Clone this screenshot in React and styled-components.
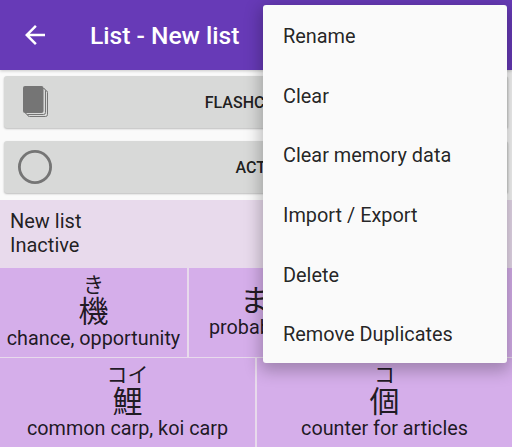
import React from "react"
import styled, { createGlobalStyle } from "styled-components"

const MENU_ITEMS = [
  "Rename",
  "Clear",
  "Clear memory data",
  "Import / Export",
  "Delete",
  "Remove Duplicates",
]

const App = () => (
  <Screen>
    <GlobalStyle />
    <Header>
      <BackIcon viewBox="0 0 24 24">
        <path d="M20 11H7.83l5.59-5.59L12 4l-8 8 8 8 1.41-1.41L7.83 13H20v-2z" />
      </BackIcon>
      <Title>List - New list</Title>
    </Header>

    <Buttons>
      <ActionButton>
        <DeckSlot>
          <svg width="28" height="34" viewBox="0 0 28 34">
            <rect x="5.5" y="5.5" width="20" height="26" rx="2" fill="#d8d9d8" stroke="#757575" />
            <rect x="3.5" y="3.5" width="20" height="26" rx="2" fill="#d8d9d8" stroke="#757575" />
            <rect x="1" y="1" width="20.5" height="27" rx="2" fill="#757575" />
          </svg>
        </DeckSlot>
        <ButtonLabel $shift="-2px">FLASHCARDS</ButtonLabel>
      </ActionButton>
      <ActionButton>
        <CircleSlot>
          <svg width="36" height="36" viewBox="0 0 36 36">
            <circle cx="18" cy="18" r="15.6" fill="none" stroke="#757575" strokeWidth="2.8" />
          </svg>
        </CircleSlot>
        <ButtonLabel $shift="32px">ACTIVATE</ButtonLabel>
      </ActionButton>
    </Buttons>

    <ListInfo>
      <div>New list</div>
      <div>Inactive</div>
    </ListInfo>

    <CardRow>
      <Card $basis="187px">
        <Reading>き</Reading>
        <Kanji>機</Kanji>
        <Meaning>chance, opportunity</Meaning>
      </Card>
      <Card $basis="132px">
        <Kanji>ま</Kanji>
        <Meaning>probability</Meaning>
      </Card>
      <Card />
    </CardRow>
    <CardRow>
      <Card>
        <Reading>コイ</Reading>
        <Kanji>鯉</Kanji>
        <Meaning>common carp, koi carp</Meaning>
      </Card>
      <Card>
        <Reading>コ</Reading>
        <Kanji>個</Kanji>
        <Meaning>counter for articles</Meaning>
      </Card>
    </CardRow>

    <Menu>
      {MENU_ITEMS.map(item => (
        <MenuItem key={item}>{item}</MenuItem>
      ))}
    </Menu>
  </Screen>
)

const GlobalStyle = createGlobalStyle`
  html, body {
    margin: 0;
    padding: 0;
    background: #fafafa;
  }
  body {
    font-family: Roboto, "Noto Sans CJK JP", sans-serif;
  }
`

const Screen = styled.div`
  position: relative;
  width: 512px;
  height: 447px;
  overflow: hidden;
  background: #fafafa;
`

const Header = styled.header`
  position: relative;
  display: flex;
  align-items: center;
  height: 70px;
  padding-left: 20px;
  background: #673ab7;
  box-shadow: 0 1px 3px rgba(0, 0, 0, 0.2);
`

const BackIcon = styled.svg`
  width: 30px;
  height: 30px;
  fill: #fff;
`

const Title = styled.h1`
  margin: 0 0 0 40px;
  color: #fff;
  font-size: 24.6px;
  font-weight: 500;
`

const Buttons = styled.div`
  display: flex;
  flex-direction: column;
  gap: 13px;
  padding: 6px 4px 7px;
`

const ActionButton = styled.div`
  position: relative;
  display: flex;
  align-items: center;
  justify-content: center;
  height: 52px;
  border-radius: 3px;
  background: #d8d9d8;
  box-shadow: 0 1px 2px rgba(0, 0, 0, 0.25);
`

const DeckSlot = styled.div`
  position: absolute;
  left: 18px;
  display: flex;
`

const CircleSlot = styled.div`
  position: absolute;
  left: 13px;
  display: flex;
`

const ButtonLabel = styled.span`
  margin-left: ${props => props.$shift || "0"};
  color: rgba(0, 0, 0, 0.87);
  font-size: 16px;
  font-weight: 500;
`

const ListInfo = styled.div`
  height: 68px;
  padding: 9px 10px 0;
  box-sizing: border-box;
  background: #e8daec;
  color: rgba(0, 0, 0, 0.87);
  font-size: 20px;
  line-height: 24px;
`

const CardRow = styled.div`
  display: flex;
  gap: 2px;
  height: 89px;
  padding-bottom: 1px;
  background: #e8daec;
`

const Card = styled.div`
  flex: ${props => (props.$basis ? `0 0 ${props.$basis}` : "1 1 0")};
  display: flex;
  flex-direction: column;
  align-items: center;
  justify-content: center;
  background: #d5aeea;
  color: rgba(0, 0, 0, 0.87);
`

const Reading = styled.div`
  padding-top: 1px;
  font-size: 21px;
  line-height: 21px;
`

const Kanji = styled.div`
  font-size: 30px;
  line-height: 32px;
`

const Meaning = styled.div`
  margin-top: -1px;
  font-size: 19.8px;
  line-height: 24px;
  white-space: nowrap;
`

const Menu = styled.div`
  position: absolute;
  top: 5px;
  left: 263px;
  width: 244px;
  border-radius: 3px;
  background: #fafafa;
  box-shadow: 0 5px 16px 3px rgba(0, 0, 0, 0.25);
`

const MenuItem = styled.div`
  height: 59.7px;
  padding: 2px 0 0 20px;
  box-sizing: border-box;
  color: rgba(0, 0, 0, 0.87);
  font-size: 19.9px;
  line-height: 59.7px;
`

export default App
